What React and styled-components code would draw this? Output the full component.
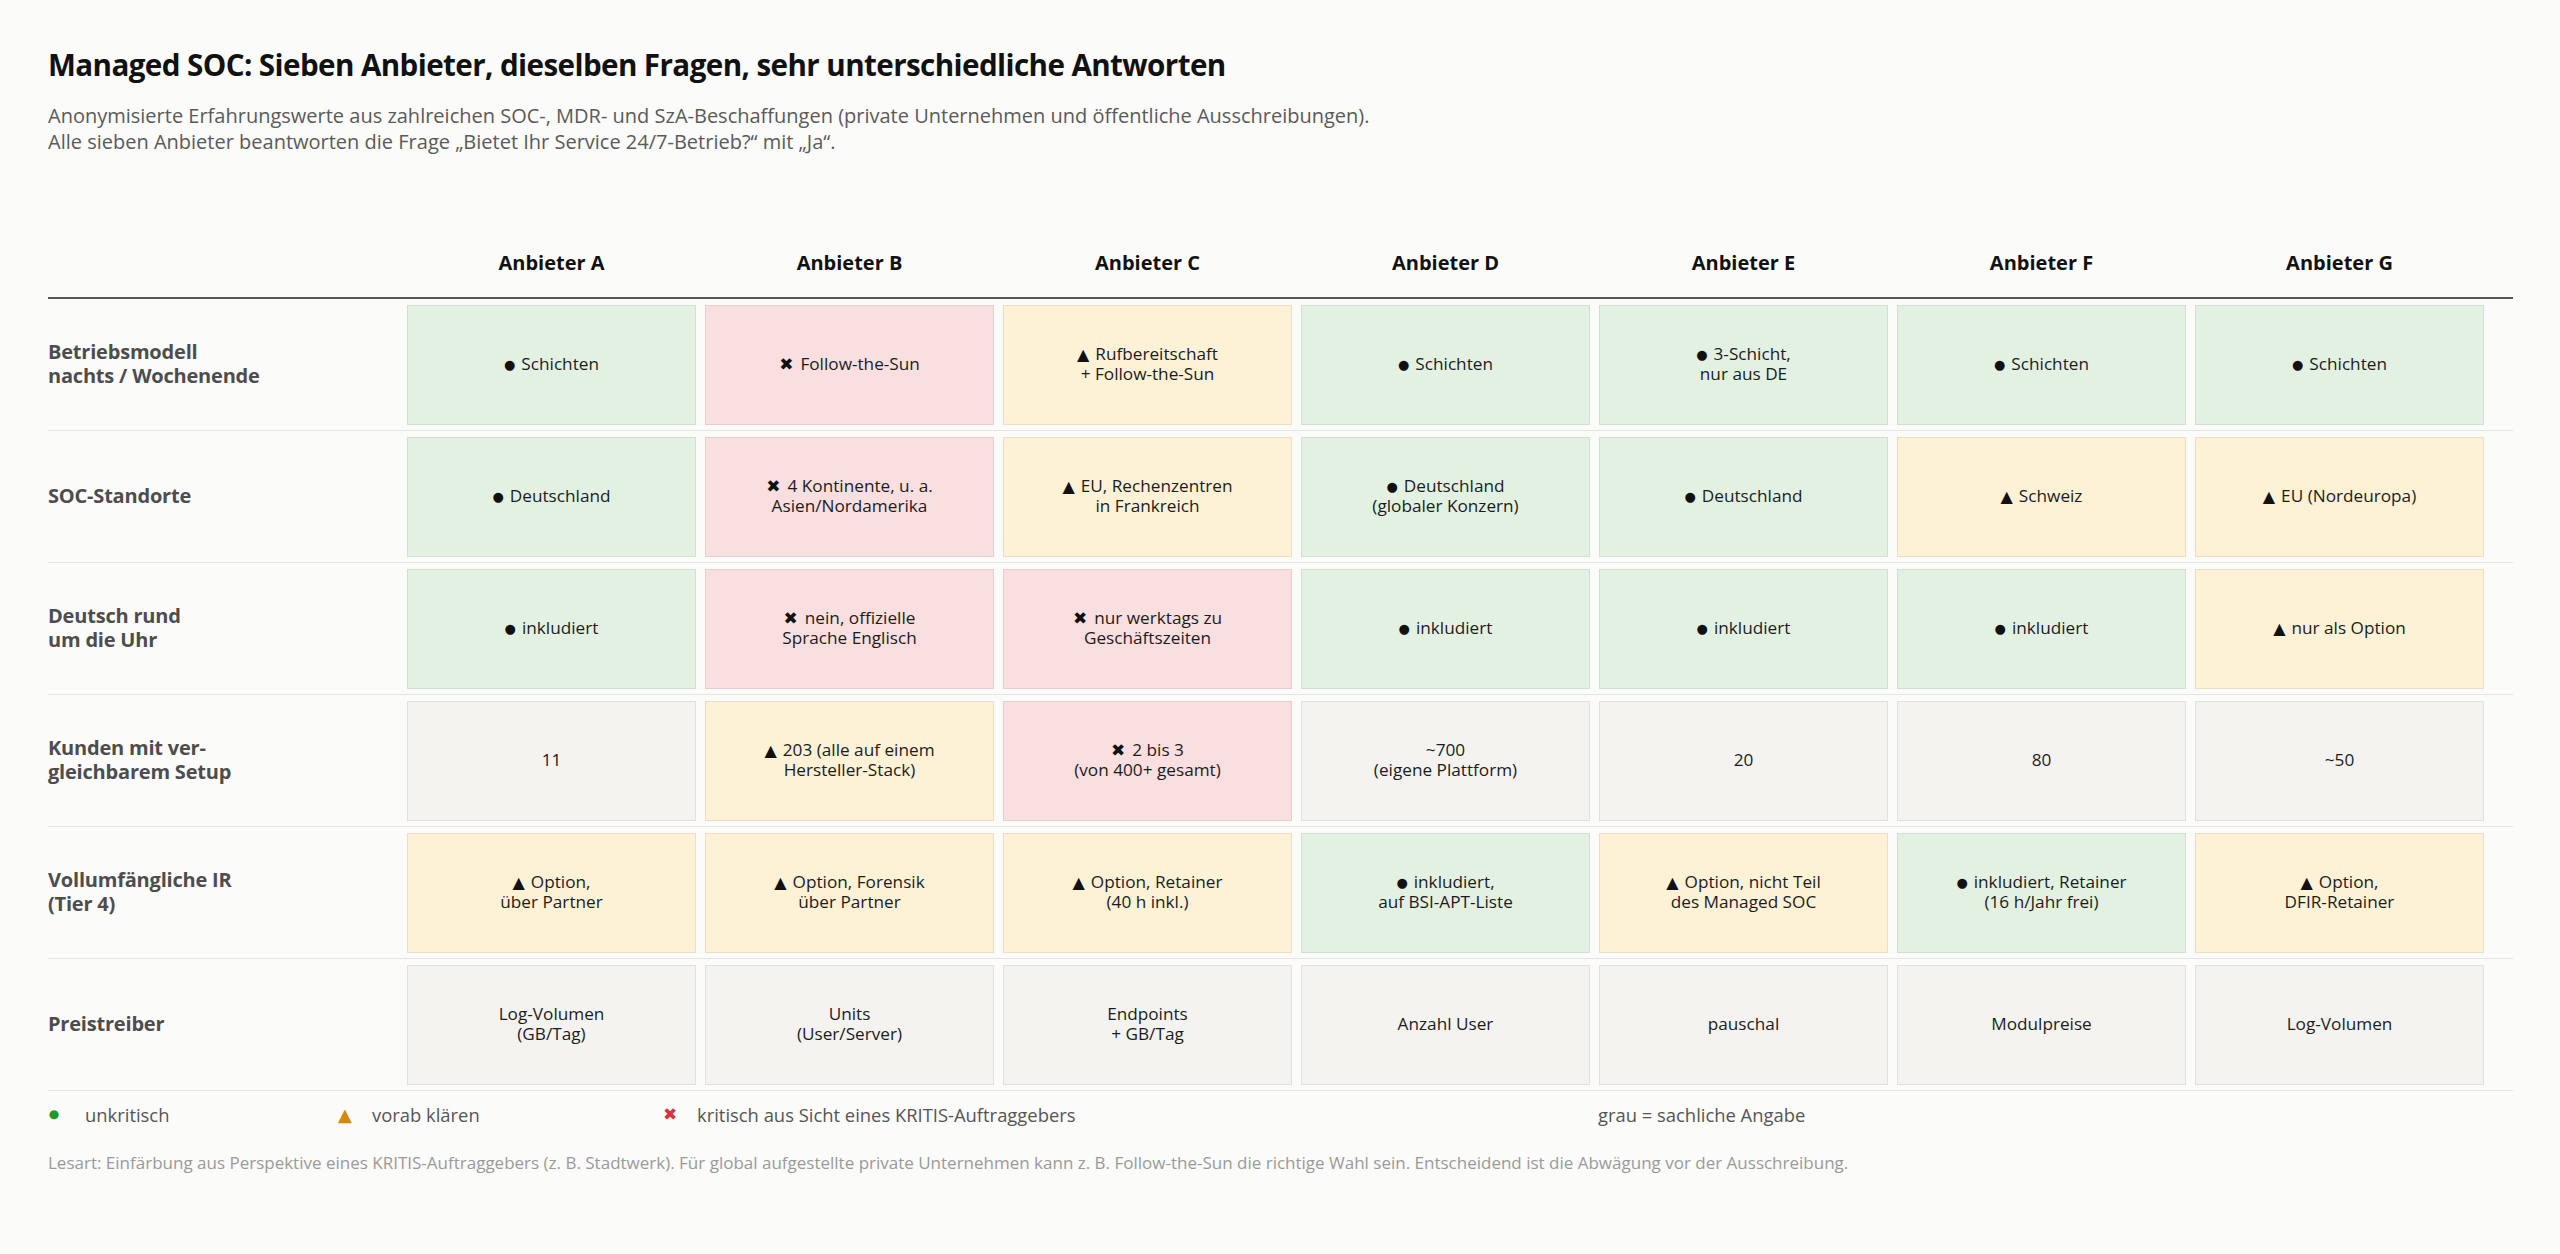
import React from "react";
import styled, { createGlobalStyle } from "styled-components";

const GlobalStyle = createGlobalStyle`
  html, body { margin: 0; padding: 0; background: #fbfbf9; }
  body { font-family: "Open Sans", "Noto Sans", "DejaVu Sans", sans-serif; color: #1c1c1c; }
`;

const Page = styled.div`
  padding: 47px 47px 40px 48px;
`;

const Title = styled.h1`
  margin: 0;
  font-size: 29.6px;
  line-height: 36px;
  font-weight: 700;
  color: #111;
  letter-spacing: -0.02em;
`;

const Subtitle = styled.p`
  margin: 20px 0 0;
  font-size: 20px;
  line-height: 26px;
  color: #5a5a5a;
`;

const Table = styled.div`
  margin-top: 96px;
`;

const Row = styled.div`
  display: grid;
  grid-template-columns: 350px repeat(7, 289px);
  column-gap: 9px;
  align-items: center;
  padding: ${(p) => (p.$head ? "0 0 22px" : "6px 0 5px")};
  border-bottom: ${(p) => (p.$head ? "2px solid #585858" : "1px solid #e4e4e0")};
`;

const HeadCell = styled.div`
  font-size: 20px;
  line-height: 24px;
  font-weight: 700;
  color: #111;
  text-align: center;
`;

const Label = styled.div`
  font-size: 20px;
  line-height: 24px;
  font-weight: 700;
  color: #4d4d4d;
  letter-spacing: -0.01em;
  padding-bottom: 2px;
`;

const LabelLine = styled.div``;

const tones = {
  g: "#e3f1e3",
  r: "#f9dfe0",
  y: "#fdf1d6",
  n: "#f4f3f0",
};

const Cell = styled.div`
  height: 120px;
  box-sizing: border-box;
  padding-bottom: 2px;
  border: 1px solid rgba(0, 0, 0, 0.075);
  background: ${(p) => tones[p.$tone]};
  display: flex;
  flex-direction: column;
  align-items: center;
  justify-content: center;
  text-align: center;
  font-size: 17.2px;
  color: #1c1c1c;
`;

const Line = styled.div`
  line-height: 20px;
  height: 20px;
  white-space: nowrap;
`;

const Sym = styled.span`
  font-family: "DejaVu Sans", sans-serif;
  font-size: ${(p) => p.$size};
  line-height: 0;
  margin-right: ${(p) => p.$mr};
  vertical-align: ${(p) => p.$va};
  color: #111;
`;

const symbols = {
  g: { ch: "●", size: "13px", va: "1px", mr: "6px" },
  r: { ch: "✖", size: "17px", va: "0", mr: "7px" },
  y: { ch: "▲", size: "16px", va: "0", mr: "6px" },
};

const Legend = styled.div`
  display: flex;
  align-items: center;
  margin-top: 11px;
  height: 24px;
  font-size: 18.4px;
  color: #555;
`;

const LegendItem = styled.div`
  display: flex;
  align-items: center;
  flex: 0 0 ${(p) => p.$w || "auto"};
`;

const LegendSym = styled.span`
  font-family: "DejaVu Sans", sans-serif;
  color: ${(p) => p.$color};
  font-size: ${(p) => p.$size};
  width: ${(p) => p.$bw};
  text-align: center;
  margin-right: ${(p) => p.$mr};
`;

const Note = styled.p`
  margin: 26px 0 0;
  font-size: 17px;
  line-height: 22px;
  color: #9a9a9a;
`;

const vendors = ["A", "B", "C", "D", "E", "F", "G"];

const rows = [
  {
    label: "Betriebsmodell\nnachts / Wochenende",
    cells: [
      ["g", "Schichten"],
      ["r", "Follow-the-Sun"],
      ["y", "Rufbereitschaft\n+ Follow-the-Sun"],
      ["g", "Schichten"],
      ["g", "3-Schicht,\nnur aus DE"],
      ["g", "Schichten"],
      ["g", "Schichten"],
    ],
  },
  {
    label: "SOC-Standorte",
    cells: [
      ["g", "Deutschland"],
      ["r", "4 Kontinente, u. a.\nAsien/Nordamerika"],
      ["y", "EU, Rechenzentren\nin Frankreich"],
      ["g", "Deutschland\n(globaler Konzern)"],
      ["g", "Deutschland"],
      ["y", "Schweiz"],
      ["y", "EU (Nordeuropa)"],
    ],
  },
  {
    label: "Deutsch rund\num die Uhr",
    cells: [
      ["g", "inkludiert"],
      ["r", "nein, offizielle\nSprache Englisch"],
      ["r", "nur werktags zu\nGeschäftszeiten"],
      ["g", "inkludiert"],
      ["g", "inkludiert"],
      ["g", "inkludiert"],
      ["y", "nur als Option"],
    ],
  },
  {
    label: "Kunden mit ver-\ngleichbarem Setup",
    cells: [
      ["n", "11"],
      ["y", "203 (alle auf einem\nHersteller-Stack)"],
      ["r", "2 bis 3\n(von 400+ gesamt)"],
      ["n", "~700\n(eigene Plattform)"],
      ["n", "20"],
      ["n", "80"],
      ["n", "~50"],
    ],
  },
  {
    label: "Vollumfängliche IR\n(Tier 4)",
    cells: [
      ["y", "Option,\nüber Partner"],
      ["y", "Option, Forensik\nüber Partner"],
      ["y", "Option, Retainer\n(40 h inkl.)"],
      ["g", "inkludiert,\nauf BSI-APT-Liste"],
      ["y", "Option, nicht Teil\ndes Managed SOC"],
      ["g", "inkludiert, Retainer\n(16 h/Jahr frei)"],
      ["y", "Option,\nDFIR-Retainer"],
    ],
  },
  {
    label: "Preistreiber",
    cells: [
      ["n", "Log-Volumen\n(GB/Tag)"],
      ["n", "Units\n(User/Server)"],
      ["n", "Endpoints\n+ GB/Tag"],
      ["n", "Anzahl User"],
      ["n", "pauschal"],
      ["n", "Modulpreise"],
      ["n", "Log-Volumen"],
    ],
  },
];

function CellContent({ tone, text }) {
  const s = symbols[tone];
  const lines = text.split("\n");
  return (
    <Cell $tone={tone}>
      {lines.map((ln, i) => (
        <Line key={i}>
          {i === 0 && s && (
            <Sym $size={s.size} $va={s.va} $mr={s.mr}>
              {s.ch}
            </Sym>
          )}
          {ln}
        </Line>
      ))}
    </Cell>
  );
}

export default function App() {
  return (
    <>
      <GlobalStyle />
      <Page>
        <Title>Managed SOC: Sieben Anbieter, dieselben Fragen, sehr unterschiedliche Antworten</Title>
        <Subtitle>
          Anonymisierte Erfahrungswerte aus zahlreichen SOC-, MDR- und SzA-Beschaffungen (private Unternehmen und öffentliche Ausschreibungen).
          <br />
          Alle sieben Anbieter beantworten die Frage „Bietet Ihr Service 24/7-Betrieb?“ mit „Ja“.
        </Subtitle>
        <Table>
          <Row $head>
            <div />
            {vendors.map((v) => (
              <HeadCell key={v}>Anbieter {v}</HeadCell>
            ))}
          </Row>
          {rows.map((r) => (
            <Row key={r.label}>
              <Label>
                {r.label.split("\n").map((ln, i) => (
                  <LabelLine key={i}>{ln}</LabelLine>
                ))}
              </Label>
              {r.cells.map(([tone, text], i) => (
                <CellContent key={i} tone={tone} text={text} />
              ))}
            </Row>
          ))}
        </Table>
        <Legend>
          <LegendItem $w="289px">
            <LegendSym $color="#1f9a2a" $size="12px" $bw="12px" $mr="25px">●</LegendSym>
            unkritisch
          </LegendItem>
          <LegendItem $w="325px">
            <LegendSym $color="#d4880c" $size="18px" $bw="16px" $mr="19px">▲</LegendSym>
            vorab klären
          </LegendItem>
          <LegendItem $w="936px">
            <LegendSym $color="#d8343c" $size="17px" $bw="16px" $mr="19px">✖</LegendSym>
            kritisch aus Sicht eines KRITIS-Auftraggebers
          </LegendItem>
          <LegendItem>grau = sachliche Angabe</LegendItem>
        </Legend>
        <Note>
          Lesart: Einfärbung aus Perspektive eines KRITIS-Auftraggebers (z. B. Stadtwerk). Für global aufgestellte private Unternehmen kann z. B. Follow-the-Sun die richtige Wahl sein. Entscheidend ist die Abwägung vor der Ausschreibung.
        </Note>
      </Page>
    </>
  );
}
